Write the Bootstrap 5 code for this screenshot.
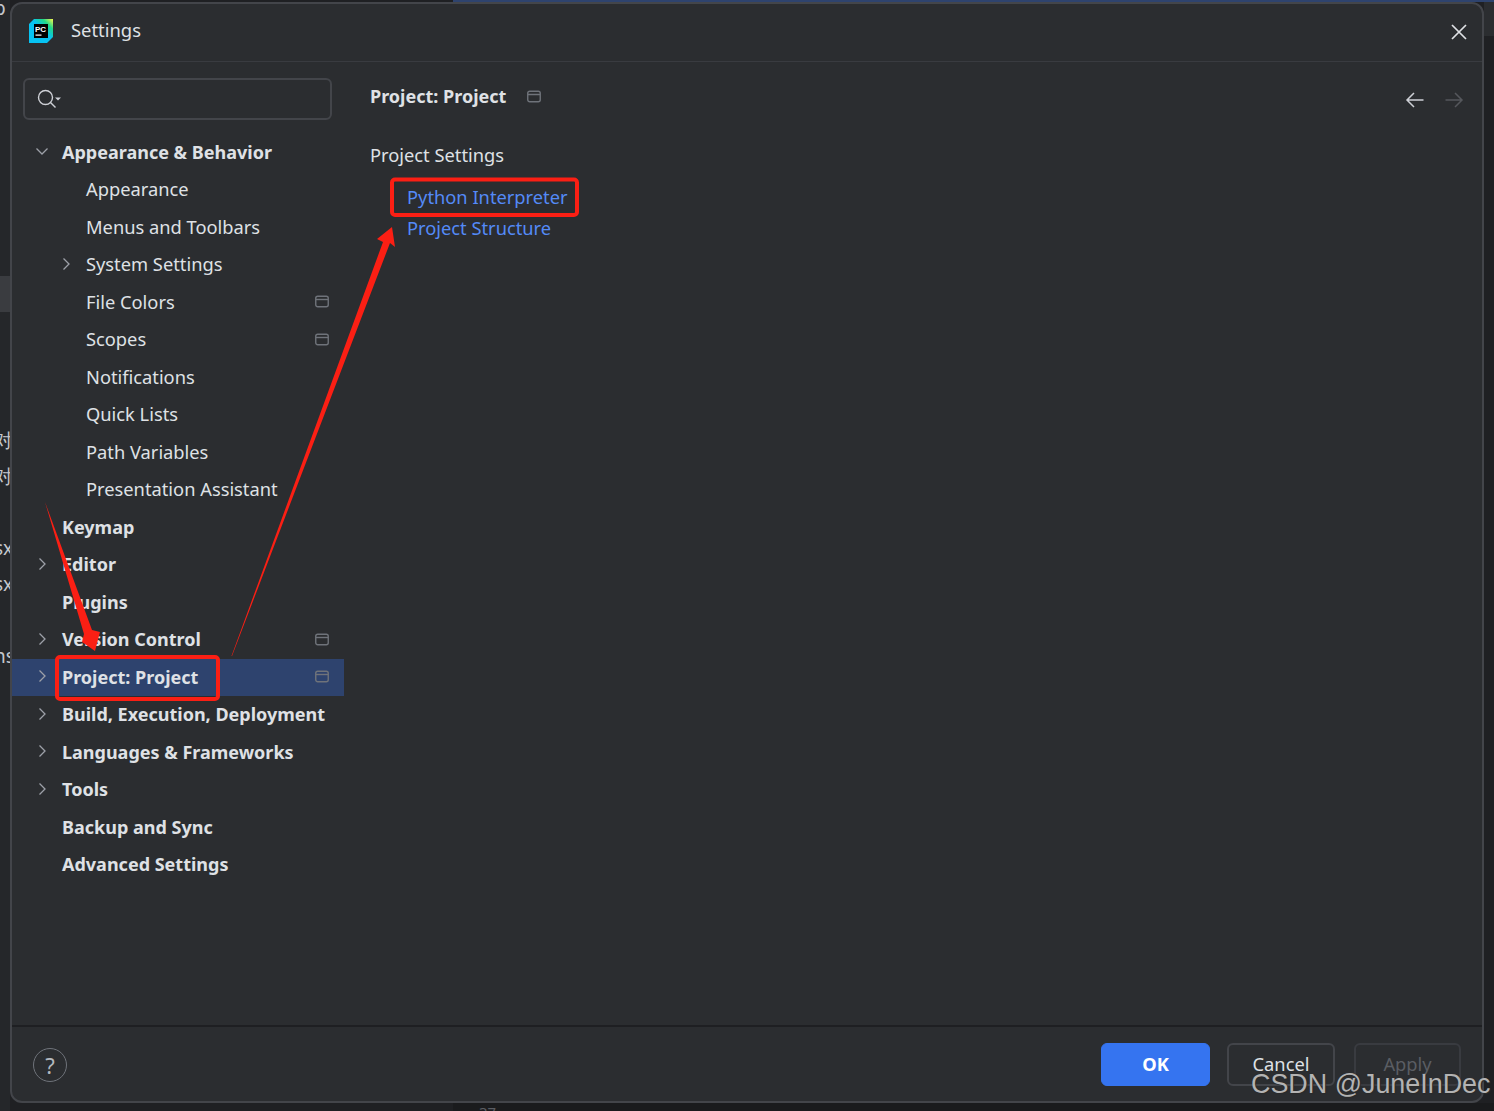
<!DOCTYPE html>
<html lang="en">
<head>
<meta charset="utf-8">
<title>Settings</title>
<link rel="stylesheet" href="https://cdn.jsdelivr.net/npm/bootstrap@5.3.0/dist/css/bootstrap.min.css">
<style>
html,body{height:1111px;overflow:hidden}
body{background:#1f2023;font-family:"Noto Sans","Open Sans",sans-serif;font-size:18.3px;color:#dfe1e5;position:relative}
.bg-left{position:absolute;left:0;top:0;width:10px;height:1111px;background:#25272a}
.bg-tab{position:absolute;left:0;top:276px;width:10px;height:36px;background:#3a3c40}
.bg-right{position:absolute;left:1484px;top:0;width:10px;height:36px;background:#2b2d30}
.bg-bottom{position:absolute;left:453px;top:1103px;right:0;height:8px;background:#1a1b1d}
.bg-frag{position:absolute;color:#c4c7cd;font-size:19px;line-height:22px;left:-6px;width:16px;overflow:hidden;white-space:nowrap}
.bg-topline{position:absolute;left:453px;top:0;right:0;height:2px;background:#2e436e}
.bg-num{position:absolute;left:479px;top:1103px;color:#5a5d63;font-size:15px;line-height:18px}
.dlg{position:absolute;left:10px;top:2px;width:1474px;height:1101px;background:#2b2d30;border:2px solid #43454a;border-radius:12px;display:flex;flex-direction:column;overflow:hidden}
.dlg-head{height:58px;border-bottom:1px solid #393b40;flex:none;padding:0 0 5px 17px}
.dlg-title{margin-left:18px;font-size:18.4px}
.dlg-logo{margin-top:2px}
.dlg-x{margin-right:14px;margin-top:3px}
.dlg-main{flex:1;min-height:0}
.side{width:332px;flex:none;padding-top:16px}
.srch{height:42px;margin:0 12px 0 11px;border:2px solid #43454a;border-radius:6px;padding-left:12px}
.tree{margin-top:13.600px}
.tr{height:37.5px;line-height:37.5px;padding-right:15px}
.tr.sub{line-height:36px}
.tr.top{font-weight:700;font-size:18px;color:#dfe1e5}
.tr.sel{background:#2e436e}
.chev{width:27px;margin-left:23px;flex:none}
.chev svg{display:block;margin-top:10.5px}
.spc{width:27px;margin-left:23px;flex:none}
.sub{padding-left:74px}
.sub.more{padding-left:47px}
.sub .chev{margin-left:0}
.prj{margin-left:auto;margin-top:-.5px;flex:none}
.cont{padding:0 18px 0 26px}
.crumb{height:70px}
.crumb b{font-weight:700;font-size:18px;margin-top:-2px}
.crumb-ic{margin-left:21px}
.nav-arrows{margin-top:6px;gap:19px}
.sect{margin-top:10px;line-height:26px}
.lnks{padding-left:37px;margin-top:13px}
.lnks a{display:block;color:#548af7;text-decoration:none;line-height:31px}
.dlg-foot{height:76px;flex:none;border-top:2px solid #1e1f22;padding:1px 21px 0 21px}
.hlp{width:34px;height:34px;border:1px solid #6f737a;border-radius:50%;color:#b4b8bf;font-size:22px;line-height:1}
.ide-btn{height:43px;border-radius:6px;padding:0;font-size:18.3px;line-height:1}
.ide-ok{width:109px;background:#3574f0;border-color:#3574f0;color:#fff;font-weight:700}
.ide-can{width:108px;margin-left:17px;background:transparent;border:2px solid #43454a;color:#dfe1e5}
.ide-app{width:107px;margin-left:19px;--bs-btn-disabled-bg:transparent;--bs-btn-disabled-border-color:#393b40;--bs-btn-disabled-color:#5a5d63;--bs-btn-disabled-opacity:1;border-width:2px}
.mark-svg{position:absolute;left:0;top:0;pointer-events:none}
.wm{position:absolute;left:1251px;top:1067px;font-family:"Liberation Sans",sans-serif;font-size:26.9px;line-height:34px;color:#b3b3b3;text-shadow:1px 1px 1px #2a2a2a;white-space:nowrap}
.pc-txt{font-family:"Liberation Sans",sans-serif;font-weight:700;font-size:8px}
</style>
</head>
<body>
<div class="bg-left"></div>
<div class="bg-tab"></div>
<div class="bg-right"></div>
<div class="bg-bottom"></div>
<div class="bg-topline"></div>
<div class="bg-frag" style="top:-3px">p</div>
<div class="bg-frag" style="top:429px">对)</div>
<div class="bg-frag" style="top:465px">对)</div>
<div class="bg-frag" style="top:537px">sx</div>
<div class="bg-frag" style="top:573px">sx</div>
<div class="bg-frag" style="top:645px">ns</div>
<div class="bg-num">37</div>

<div class="dlg">
  <div class="dlg-head d-flex align-items-center">
    <svg class="dlg-logo" width="24" height="24" viewBox="0 0 24 24"><defs><linearGradient id="pcg" x1="0" y1="1" x2="1" y2="0"><stop offset=".55" stop-color="#07c3f2"/><stop offset=".78" stop-color="#21d789"/><stop offset="1" stop-color="#fcf84a"/></linearGradient></defs><path d="M5 0H24V18L18 24H0V5Z" fill="url(#pcg)"/><rect x="5" y="5" width="14" height="14" fill="#000"/><text class="pc-txt" x="6" y="12.500" fill="#fff">PC</text><rect x="6.500" y="15.500" width="6" height="1.200" fill="#fff"/></svg>
    <span class="dlg-title">Settings</span>
    <svg class="dlg-x ms-auto" width="18" height="18" viewBox="0 0 18 18"><path d="M2 2L16 16M16 2L2 16" stroke="#dfe1e5" stroke-width="1.700" fill="none"/></svg>
  </div>
  <div class="dlg-main d-flex">
    <div class="side">
      <div class="srch d-flex align-items-center">
        <svg width="26" height="22" viewBox="0 0 26 22"><circle cx="8.500" cy="9.500" r="7" fill="none" stroke="#ced0d6" stroke-width="1.400"/><path d="M13.500 14.500L18.500 19.500" stroke="#ced0d6" stroke-width="1.400"/><path d="M18 9.500h6l-3 3z" fill="#ced0d6"/></svg>
      </div>
      <div class="tree">
        <div class="tr top d-flex"><span class="chev"><svg width="14" height="14" viewBox="0 0 14 14"><path d="M1.500 4.500L7 10L12.500 4.500" stroke="#9da0a8" stroke-width="1.300" fill="none"/></svg></span><span>Appearance &amp; Behavior</span></div>
        <div class="tr sub d-flex">Appearance</div>
        <div class="tr sub d-flex">Menus and Toolbars</div>
        <div class="tr sub more d-flex"><span class="chev"><svg width="14" height="14" viewBox="0 0 14 14"><path d="M4.500 1.500L10 7L4.500 12.500" stroke="#9da0a8" stroke-width="1.300" fill="none"/></svg></span><span>System Settings</span></div>
        <div class="tr sub d-flex"><span>File Colors</span><svg class="prj" width="14" height="37" viewBox="0 0 14 37"><rect x=".75" y="13.250" width="12.500" height="10.500" rx="2" fill="none" stroke="#6f737a" stroke-width="1.400"/><path d="M1 16.500H13" stroke="#6f737a" stroke-width="1.400"/></svg></div>
        <div class="tr sub d-flex"><span>Scopes</span><svg class="prj" width="14" height="37" viewBox="0 0 14 37"><rect x=".75" y="13.250" width="12.500" height="10.500" rx="2" fill="none" stroke="#6f737a" stroke-width="1.400"/><path d="M1 16.500H13" stroke="#6f737a" stroke-width="1.400"/></svg></div>
        <div class="tr sub d-flex">Notifications</div>
        <div class="tr sub d-flex">Quick Lists</div>
        <div class="tr sub d-flex">Path Variables</div>
        <div class="tr sub d-flex">Presentation Assistant</div>
        <div class="tr top d-flex"><span class="spc"></span><span>Keymap</span></div>
        <div class="tr top d-flex"><span class="chev"><svg width="14" height="14" viewBox="0 0 14 14"><path d="M4.500 1.500L10 7L4.500 12.500" stroke="#9da0a8" stroke-width="1.300" fill="none"/></svg></span><span>Editor</span></div>
        <div class="tr top d-flex"><span class="spc"></span><span>Plugins</span></div>
        <div class="tr top d-flex"><span class="chev"><svg width="14" height="14" viewBox="0 0 14 14"><path d="M4.500 1.500L10 7L4.500 12.500" stroke="#9da0a8" stroke-width="1.300" fill="none"/></svg></span><span>Version Control</span><svg class="prj" width="14" height="37" viewBox="0 0 14 37"><rect x=".75" y="13.250" width="12.500" height="10.500" rx="2" fill="none" stroke="#6f737a" stroke-width="1.400"/><path d="M1 16.500H13" stroke="#6f737a" stroke-width="1.400"/></svg></div>
        <div class="tr top sel d-flex"><span class="chev"><svg width="14" height="14" viewBox="0 0 14 14"><path d="M4.500 1.500L10 7L4.500 12.500" stroke="#9da0a8" stroke-width="1.300" fill="none"/></svg></span><span>Project: Project</span><svg class="prj" width="14" height="37" viewBox="0 0 14 37"><rect x=".75" y="13.250" width="12.500" height="10.500" rx="2" fill="none" stroke="#6f737a" stroke-width="1.400"/><path d="M1 16.500H13" stroke="#6f737a" stroke-width="1.400"/></svg></div>
        <div class="tr top d-flex"><span class="chev"><svg width="14" height="14" viewBox="0 0 14 14"><path d="M4.500 1.500L10 7L4.500 12.500" stroke="#9da0a8" stroke-width="1.300" fill="none"/></svg></span><span>Build, Execution, Deployment</span></div>
        <div class="tr top d-flex"><span class="chev"><svg width="14" height="14" viewBox="0 0 14 14"><path d="M4.500 1.500L10 7L4.500 12.500" stroke="#9da0a8" stroke-width="1.300" fill="none"/></svg></span><span>Languages &amp; Frameworks</span></div>
        <div class="tr top d-flex"><span class="chev"><svg width="14" height="14" viewBox="0 0 14 14"><path d="M4.500 1.500L10 7L4.500 12.500" stroke="#9da0a8" stroke-width="1.300" fill="none"/></svg></span><span>Tools</span></div>
        <div class="tr top d-flex"><span class="spc"></span><span>Backup and Sync</span></div>
        <div class="tr top d-flex"><span class="spc"></span><span>Advanced Settings</span></div>
      </div>
    </div>
    <div class="cont flex-grow-1">
      <div class="crumb d-flex align-items-center">
        <b>Project: Project</b>
        <svg class="crumb-ic" width="14" height="14" viewBox="0 0 14 14"><rect x=".75" y="1.250" width="12.500" height="10.500" rx="2" fill="none" stroke="#6f737a" stroke-width="1.400"/><path d="M1 4.500H13" stroke="#6f737a" stroke-width="1.400"/></svg>
        <div class="nav-arrows ms-auto d-flex">
          <svg width="20" height="18" viewBox="0 0 20 18"><path d="M18.500 9H2M9 2L2 9L9 16" stroke="#ced0d6" stroke-width="1.500" fill="none"/></svg>
          <svg width="20" height="18" viewBox="0 0 20 18"><path d="M1.500 9H18M11 2L18 9L11 16" stroke="#55575c" stroke-width="1.500" fill="none"/></svg>
        </div>
      </div>
      <div class="sect">Project Settings</div>
      <div class="lnks">
        <a href="#">Python Interpreter</a>
        <a href="#">Project Structure</a>
      </div>
    </div>
  </div>
  <div class="dlg-foot d-flex align-items-center">
    <div class="hlp d-flex align-items-center justify-content-center">?</div>
    <button type="button" class="btn ide-btn ide-ok ms-auto">OK</button>
    <button type="button" class="btn ide-btn ide-can">Cancel</button>
    <button type="button" class="btn ide-btn ide-app" disabled>Apply</button>
  </div>
</div>

<svg class="mark-svg" width="1494" height="1111" viewBox="0 0 1494 1111">
  <rect x="392" y="179.500" width="185" height="35.500" rx="3" fill="none" stroke="#fb1f14" stroke-width="4"/>
  <rect x="57" y="657" width="161" height="42" rx="3" fill="none" stroke="#fb1f14" stroke-width="4"/>
  <path d="M231.500 656L383 242L377 239L392 227L395 247L390 243L232 656Z" fill="#fb1f14"/>
  <path d="M45 502L92 630L100 632L95 651L82 642L84 634Z" fill="#fb1f14"/>
</svg>
<div class="wm">CSDN @JuneInDec</div>
<script src="https://cdn.jsdelivr.net/npm/bootstrap@5.3.0/dist/js/bootstrap.bundle.min.js"></script>
</body>
</html>
